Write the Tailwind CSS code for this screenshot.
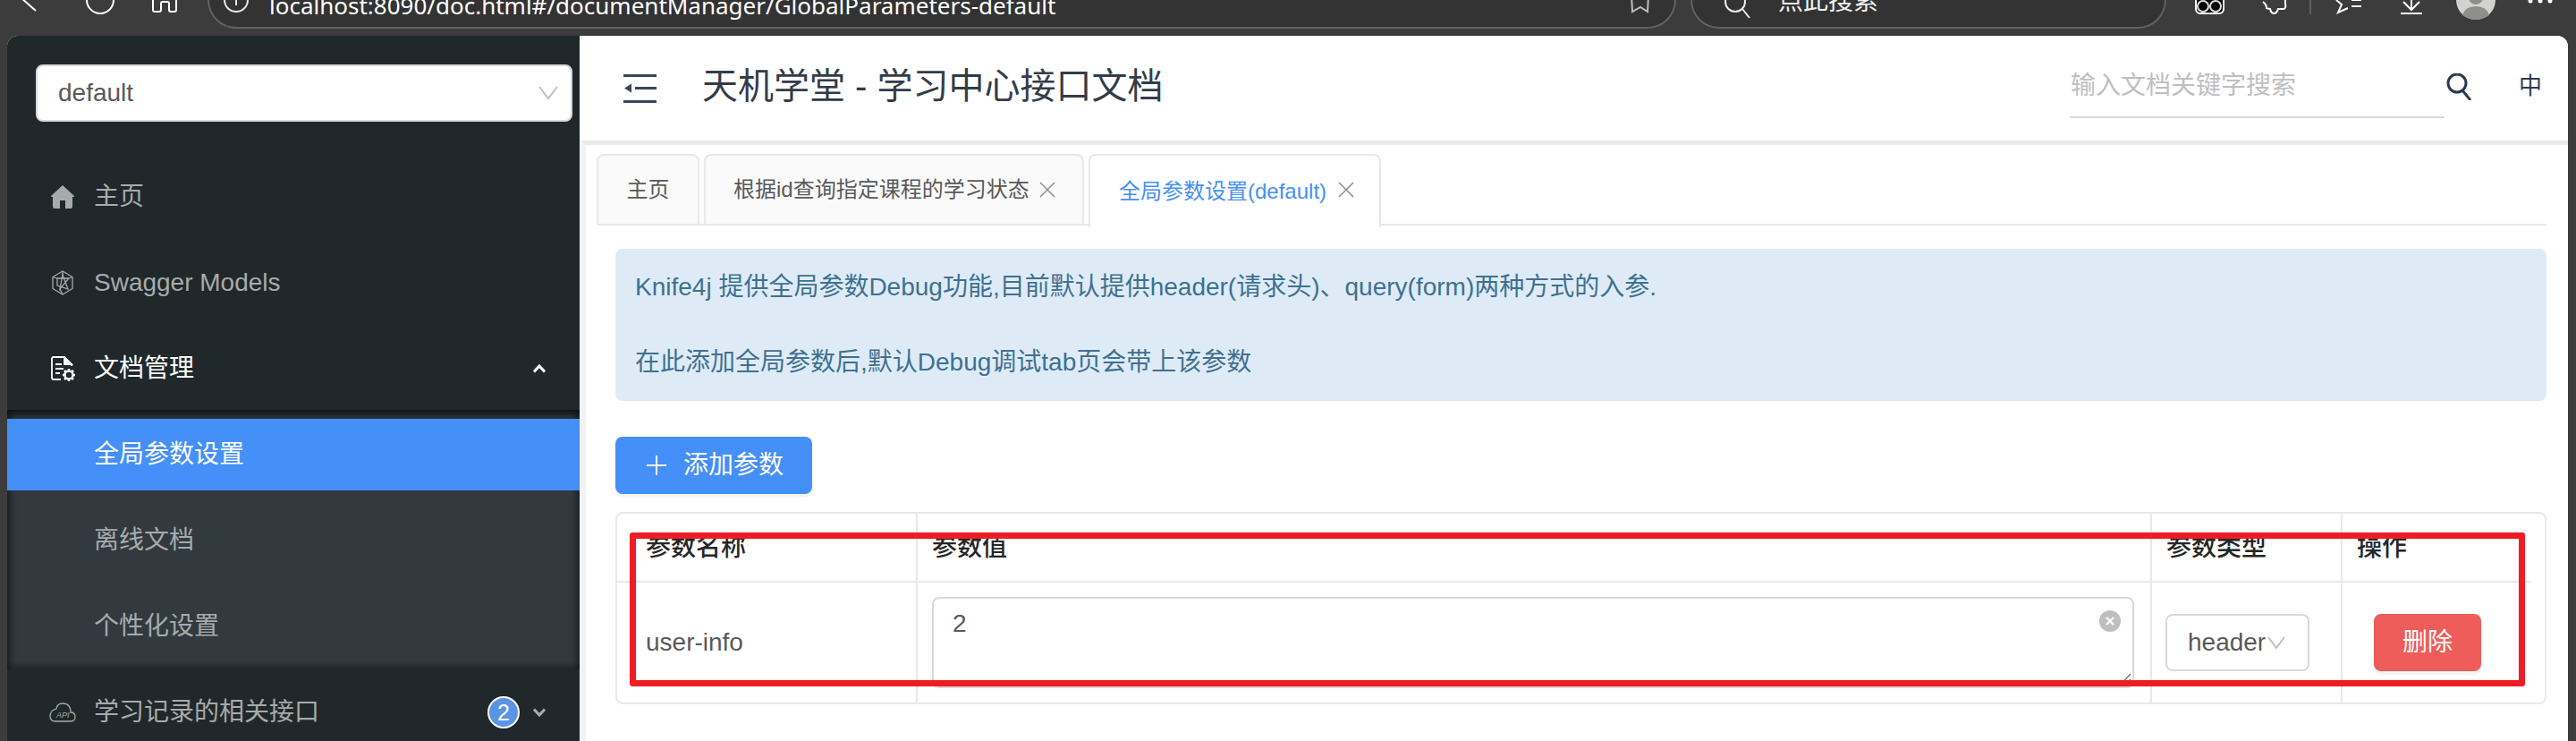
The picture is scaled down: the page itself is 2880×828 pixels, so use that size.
<!DOCTYPE html>
<html lang="zh-CN">
<head>
<meta charset="utf-8">
<title>天机学堂 - 学习中心接口文档</title>
<script src="https://cdn.jsdelivr.net/npm/@tailwindcss/browser@4"></script>
</head>
<body class="m-0">
<div class="relative w-[2880px] h-[828px] overflow-hidden flex flex-col bg-[#3c3c3c] font-['Liberation_Sans','Noto_Sans_CJK_SC',sans-serif]">

  <!-- browser toolbar -->
  <div class="h-[40px] shrink-0 flex items-start overflow-hidden">
    <svg class="w-[232px] h-[40px] shrink-0" viewBox="0 0 232 40" fill="none" stroke="#fff" stroke-width="2">
      <path d="M40 12 L24 -2"/>
      <circle cx="112" cy="0" r="15"/>
      <path d="M171 -2 V11 Q171 13 173 13 H178 Q180 13 180 11 V4 Q180 2 182 2 H187 Q189 2 189 4 V11 Q189 13 191 13 H195 Q197 13 197 11 V-2"/>
    </svg>
    <div class="w-[1642px] h-[32px] shrink-0 flex items-end justify-between bg-[#333333] border-b-2 border-x-2 border-[#626262] rounded-b-[32px] text-white text-[28px] leading-[32px]">
      <div class="flex items-end">
        <svg class="w-[67px] h-[30px] shrink-0" viewBox="0 0 67 30" fill="none" stroke="#e8e8e8" stroke-width="2"><circle cx="30" cy="0" r="13"/><path d="M30 0 V6"/></svg>
        <span class="whitespace-nowrap pb-[8px] font-['Noto_Sans','Liberation_Sans',sans-serif] text-[26px]">localhost:8090/doc.html#/documentManager/GlobalParameters-default</span>
      </div>
      <svg class="w-[60px] h-[30px] shrink-0" viewBox="0 0 60 30" fill="none" stroke="#bdbdbd" stroke-width="2"><path d="M12 -6 L13 13 L22 8 L30 13 L31 -6"/></svg>
    </div>
    <div class="w-[532px] h-[32px] shrink-0 ml-[16px] flex items-end bg-[#333333] border-b-2 border-x-2 border-[#626262] rounded-b-[32px] text-[#f2f2f2] text-[28px] leading-[32px]">
      <svg class="ml-[36px] w-[30px] h-[30px] shrink-0" viewBox="0 0 30 30" fill="none" stroke="#ededed" stroke-width="2"><circle cx="12" cy="2" r="11"/><path d="M20 10 L28 20"/></svg>
      <span class="ml-[30px] pb-[12px] whitespace-nowrap">点此搜索</span>
    </div>
    <svg class="w-[458px] h-[40px] shrink-0" viewBox="2422 0 458 40" fill="none" stroke="#fff" stroke-width="2">
      <rect x="2455" y="-14" width="31" height="29" rx="5" fill="#000"/>
      <circle cx="2463" cy="7" r="6" stroke="#ddd"/><circle cx="2477" cy="7" r="6" stroke="#ddd"/>
      <path d="M2530 2 Q2534 5 2534 9 Q2536 10 2538 10 Q2539 15 2543 15 Q2546 14 2547 10 H2553 Q2556 10 2555 4 V-4"/>
      <path d="M2583 0 V16" stroke="#5e5e5e"/>
      <path d="M2612 0 L2618 5 L2614 14 L2625 9"/>
      <path d="M2629 0 H2640 M2629 7 H2640"/>
      <path d="M2696 -6 V11 M2687 2 L2696 11 L2705 2 M2684 15 H2708"/>
      <circle cx="2768" cy="0" r="22" fill="#d3d2ce" stroke="none"/>
      <circle cx="2768" cy="-3" r="8" fill="#8e8e8c" stroke="none"/>
      <path d="M2753 17 Q2756 7 2768 7 Q2780 7 2783 17 Q2776 22 2768 22 Q2760 22 2753 17 Z" fill="#8e8e8c" stroke="none"/>
      <circle cx="2829" cy="1" r="2.5" fill="#fff" stroke="none"/><circle cx="2840" cy="1" r="2.5" fill="#fff" stroke="none"/><circle cx="2851" cy="1" r="2.5" fill="#fff" stroke="none"/>
    </svg>
  </div>

  <!-- page -->
  <div class="flex-1 min-h-0 flex ml-[8px] mr-[9px] rounded-t-[12px] overflow-hidden bg-white">

    <!-- sidebar -->
    <aside class="w-[640px] shrink-0 bg-[#20282b] flex flex-col text-[28px] text-[#a8abac]">
      <div class="mt-[32px] ml-[32px] w-[600px] h-[64px] shrink-0 flex items-center justify-between bg-white border-2 border-[#d9d9d9] rounded-[8px] pl-[23px] pr-[14px] text-[#595959]">
        <span>default</span>
        <svg class="w-[22px] h-[16px]" viewBox="0 0 22 16" fill="none" stroke="#bfbfbf" stroke-width="2"><path d="M1 1 L11 14 L21 1"/></svg>
      </div>
      <div class="mt-[34px] h-[96px] shrink-0 flex items-center pl-[48px] pt-[3px]">
        <svg class="w-[28px] h-[28px] shrink-0" viewBox="0 0 28 28" fill="#a8abac"><path d="M14 1 L27 13 Q27.500 14 26 14 H25 V25 Q25 27 23 27 H17 V18 H11 V27 H5 Q3 27 3 25 V14 H2 Q.5 14 1 13 Z"/></svg>
        <span class="ml-[21px]">主页</span>
      </div>
      <div class="h-[96px] shrink-0 flex items-center pl-[48px] pt-[3px]">
        <svg class="w-[28px] h-[28px] shrink-0" viewBox="0 0 28 28" fill="none" stroke="#a8abac" stroke-width="1.300"><path d="M14 1 L25 7.500 V20.500 L14 27 L3 20.500 V7.500 Z"/><path d="M14 5 L20 21 L8 17 L8 9 L21 9 L11 21 Z"/><path d="M14 1 V5 M3 7.500 L8 9 M25 7.500 L21 9 M14 27 L11 21"/></svg>
        <span class="ml-[21px]">Swagger Models</span>
      </div>
      <div class="h-[96px] shrink-0 flex items-center pl-[48px] pr-[38px] pt-[3px] text-white">
        <svg class="w-[28px] h-[28px] shrink-0" viewBox="0 0 28 28" fill="none" stroke="#fff" stroke-width="1.800"><path d="M12 26 H4 Q2 26 2 24 V3 Q2 1 4 1 H16 L24 9 V11"/><path d="M16 1 L24 9 H16 Z" fill="#fff"/><path d="M6 9 H13 M6 14 H15 M6 19 H11"/><circle cx="21" cy="21" r="4.500" stroke-width="2.500"/><path d="M21 14 V16 M21 26 V28 M14 21 H16 M26 21 H28 M16 16 L17.500 17.500 M24.500 24.500 L26 26 M26 16 L24.500 17.500 M17.500 24.500 L16 26" stroke-width="2.500"/></svg>
        <span class="ml-[21px]">文档管理</span>
        <svg class="ml-auto w-[14px] h-[10px]" viewBox="0 0 14 10" fill="none" stroke="#fff" stroke-width="3"><path d="M1 8.500 L7 2 L13 8.500"/></svg>
      </div>
      <div class="h-[290px] shrink-0 bg-[#323a40] shadow-[inset_0_8px_10px_-2px_rgba(0,0,0,0.55),inset_0_-3px_8px_rgba(0,0,0,0.25),inset_4px_0_8px_rgba(0,0,0,0.2),inset_-4px_0_8px_rgba(0,0,0,0.2)] pt-[10px]">
        <div class="h-[80px] flex items-center pl-[97px] bg-[#458ff8] text-white">全局参数设置</div>
        <div class="mt-[14px] h-[80px] flex items-center pl-[97px] pt-[3px]">离线文档</div>
        <div class="mt-[16px] h-[80px] flex items-center pl-[97px] pt-[3px]">个性化设置</div>
      </div>
      <div class="h-[96px] shrink-0 flex items-center pl-[47px] pr-[38px]">
        <svg class="w-[30px] h-[24px] shrink-0" viewBox="0 0 30 24" fill="none" stroke="#a8abac" stroke-width="1.300"><path d="M7 22 H24 Q29 22 29 17 Q29 12 24 12 Q24 2 15 2 Q9 2 8 8 Q1 10 1 16 Q1 22 7 22 Z"/><text x="8" y="18" font-size="9" font-style="italic" fill="#a8abac" stroke="none" font-family="Liberation Sans">API</text></svg>
        <span class="ml-[20px]">学习记录的相关接口</span>
        <span class="ml-auto w-[36px] h-[36px] rounded-full bg-[#5a94e2] border-2 border-white flex items-center justify-center text-white text-[25px] leading-none">2</span>
        <svg class="ml-[15px] w-[14px] h-[10px]" viewBox="0 0 14 10" fill="none" stroke="#a8abac" stroke-width="3"><path d="M1 1.500 L7 8 L13 1.500"/></svg>
      </div>
    </aside>

    <!-- main -->
    <main class="flex-1 min-w-0 flex flex-col bg-white">
      <header class="h-[117px] shrink-0 flex items-center pl-[49px] pr-[29px] text-[#38475a]">
        <svg class="w-[37px] h-[32px] shrink-0" viewBox="0 0 37 32" fill="#3a4656"><rect width="37" height="3"/><rect x="13" y="14" width="24" height="3"/><rect y="29" width="37" height="3"/><path d="M9 10.500 V20.500 L1 15.500 Z"/></svg>
        <h1 class="ml-[51px] -mt-[6px] text-[40px] font-normal text-[#333c48]">天机学堂 - 学习中心接口文档</h1>
        <div class="ml-auto w-[419px] h-[66px] mt-[1px] border-b-2 border-[#d9d9d9] flex items-start">
          <span class="pl-[1px] text-[28px] leading-[60px] text-[#bfbfbf]">输入文档关键字搜索</span>
        </div>
        <svg class="ml-[2px] w-[30px] h-[30px] shrink-0 -mt-[4px]" viewBox="0 0 30 30" fill="none" stroke="#2b3a52" stroke-width="3"><circle cx="12" cy="11" r="10"/><path d="M18 19 L27 30"/></svg>
        <span class="ml-[51px] text-[26px] text-[#2b3a52] -mt-[4px]">中</span>
      </header>

      <div class="flex-1 min-h-0 border-t-[5px] border-l-[7px] border-t-[#e8ecef] border-l-[#f0f2f5] flex flex-col pt-[10px]">
        <nav class="ml-[12px] mr-[24px] h-[80px] shrink-0 flex gap-[5px] border-b-2 border-[#e8e8e8] text-[24px] text-[#595959]">
          <div class="w-[115px] h-[80px] shrink-0 flex items-center justify-center bg-[#fafafa] border-2 border-[#e8e8e8] rounded-t-[8px]">主页</div>
          <div class="w-[425px] h-[80px] shrink-0 flex items-center pl-[31px] bg-[#fafafa] border-2 border-[#e8e8e8] rounded-t-[8px]">
            <span>根据id查询指定课程的学习状态</span>
            <svg class="ml-[11px] w-[18px] h-[18px]" viewBox="0 0 18 18" fill="none" stroke="#8c8c8c" stroke-width="1.500"><path d="M1 1 L17 17 M17 1 L1 17"/></svg>
          </div>
          <div class="w-[327px] h-[82px] shrink-0 flex items-start pt-[22px] pl-[32px] bg-white border-2 border-b-0 border-[#e8e8e8] rounded-t-[8px] text-[#458ff8]">
            <span>全局参数设置(default)</span>
            <svg class="ml-[13px] mt-[7px] w-[18px] h-[18px]" viewBox="0 0 18 18" fill="none" stroke="#8c8c8c" stroke-width="1.500"><path d="M1 1 L17 17 M17 1 L1 17"/></svg>
          </div>
        </nav>

        <div class="pl-[33px] pr-[24px] flex flex-col">
          <div class="mt-[26px] h-[170px] shrink-0 bg-[#deebf7] rounded-[8px] py-[22px] pl-[22px] text-[28px] leading-[42px] text-[#3f7091]">
            Knife4j 提供全局参数Debug功能,目前默认提供header(请求头)、query(form)两种方式的入参.<br><br>在此添加全局参数后,默认Debug调试tab页会带上该参数
          </div>
          <button class="mt-[40px] w-[220px] h-[64px] flex items-center pl-[34px] bg-[#458ff8] rounded-[8px] text-white text-[28px] shadow-[0_4px_0_rgba(0,0,0,0.04)]">
            <svg class="w-[24px] h-[24px] shrink-0" viewBox="0 0 24 24" fill="none" stroke="#fff" stroke-width="2"><path d="M12 1 V23 M1 12 H23"/></svg>
            <span class="ml-[18px]">添加参数</span>
          </button>
          <div class="mt-[20px] h-[215px] border-2 border-[#e8e8e8] rounded-[8px] grid grid-cols-[336px_1380px_213px_226px] grid-rows-[77px_134px] text-[28px] text-[#595959]">
            <div class="border-r-2 border-b-2 border-[#e8e8e8] pl-[32px] flex items-center font-medium text-[#262626]">参数名称</div>
            <div class="border-r-2 border-b-2 border-[#e8e8e8] pl-[16px] flex items-center font-medium text-[#262626]">参数值</div>
            <div class="border-r-2 border-b-2 border-[#e8e8e8] pl-[16px] flex items-center font-medium text-[#262626]">参数类型</div>
            <div class="mr-[15px] border-b-2 border-[#e8e8e8] pl-[16px] flex items-center font-medium text-[#262626]">操作</div>
            <div class="border-r-2 border-[#e8e8e8] pl-[32px] flex items-center">user-info</div>
            <div class="border-r-2 border-[#e8e8e8] pl-[16px] flex items-center">
              <div class="relative w-[1344px] h-[102px] border-2 border-[#d9d9d9] rounded-[8px] pl-[21px] pt-[8px] leading-[40px]">
                2
                <svg class="absolute top-[13px] right-[13px] w-[24px] h-[24px]" viewBox="0 0 24 24"><circle cx="12" cy="12" r="12" fill="#bfbfbf"/><path d="M8 8 L16 16 M16 8 L8 16" stroke="#fff" stroke-width="2"/></svg>
                <svg class="absolute bottom-[1px] right-[1px] w-[14px] h-[14px]" viewBox="0 0 14 14" stroke="#6b6b6b" stroke-width="1.200"><path d="M2 13 L13 1 M8 13 L13 7"/></svg>
              </div>
            </div>
            <div class="border-r-2 border-[#e8e8e8] pl-[15px] flex items-center">
              <div class="w-[161px] h-[64px] border-2 border-[#d9d9d9] rounded-[8px] pl-[23px] flex items-center">
                <span>header</span>
                <svg class="ml-[2px] w-[20px] h-[14px]" viewBox="0 0 20 14" fill="none" stroke="#bfbfbf" stroke-width="2"><path d="M1 1 L10 13 L19 1"/></svg>
              </div>
            </div>
            <div class="pl-[35px] flex items-center">
              <button class="w-[120px] h-[64px] bg-[#ee5d5a] rounded-[8px] text-white text-[28px] shadow-[0_4px_0_rgba(0,0,0,0.04)]">删除</button>
            </div>
          </div>
        </div>
      </div>
    </main>
  </div>

  <!-- red annotation drawn over the screenshot -->
  <div class="absolute left-[704px] top-[595px] w-[2119px] h-[172px] border-[7px] border-[#ee1c25] rounded-[3px]"></div>
</div>
</body>
</html>
